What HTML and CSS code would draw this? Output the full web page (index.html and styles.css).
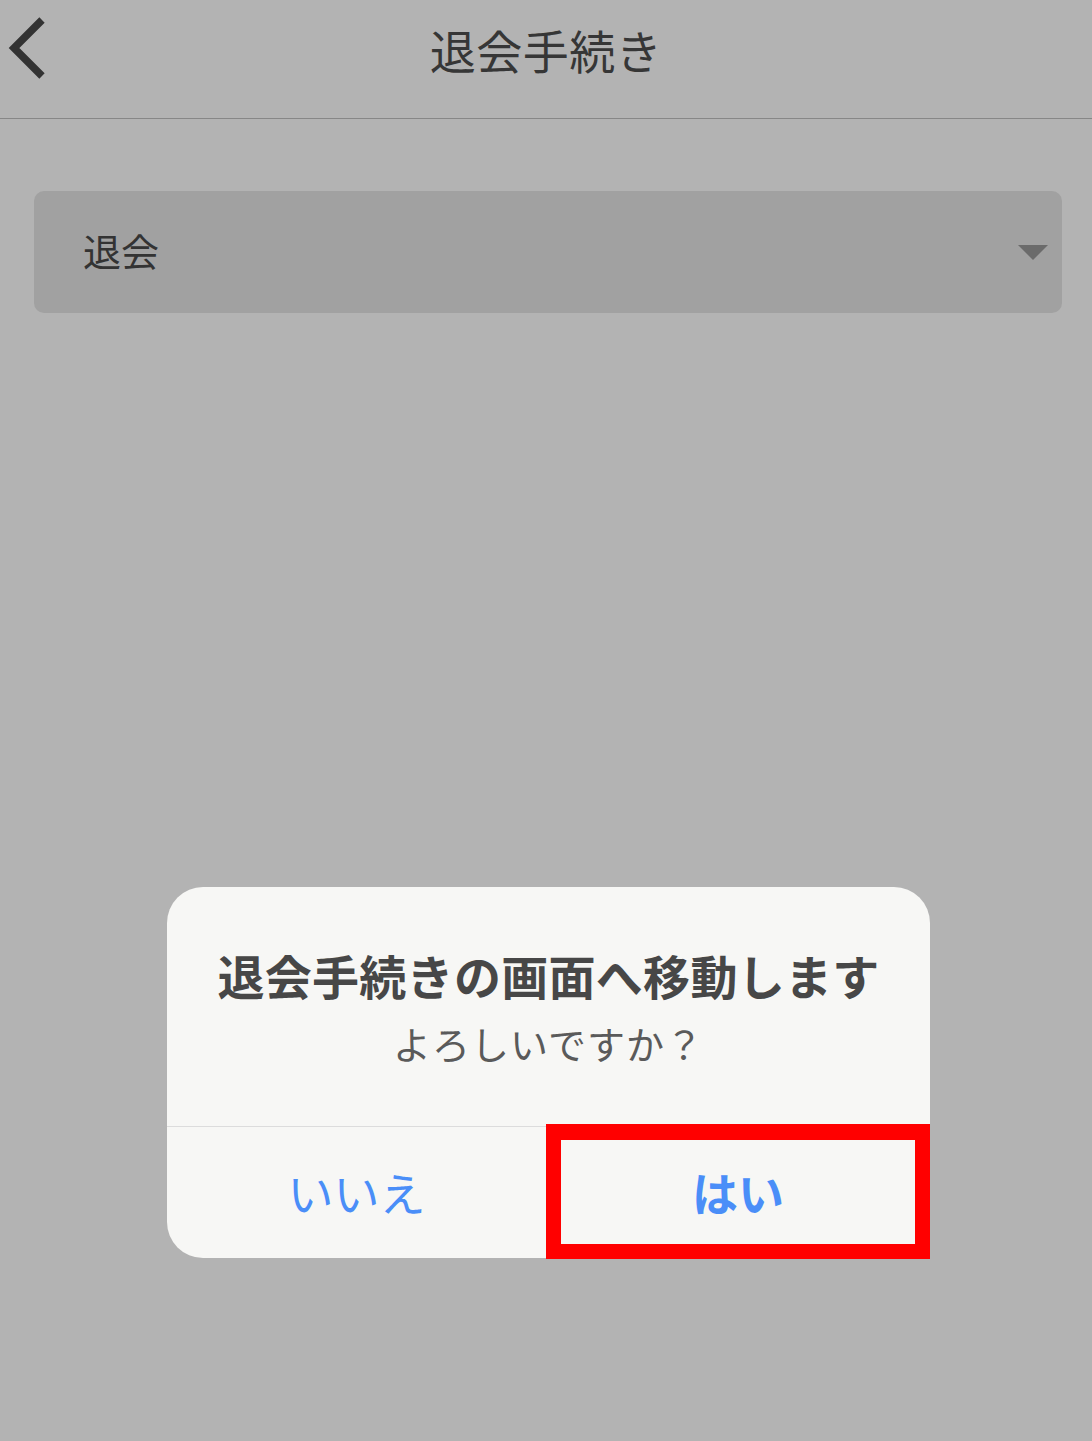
FILE: index.html
```html
<!DOCTYPE html>
<html lang="ja">
<head>
<meta charset="utf-8">
<title>退会手続き</title>
<link rel="stylesheet" href="styles.css">
</head>
<body>
<header class="navbar">
  <a class="back" aria-label="戻る">
    <svg width="56" height="70" viewBox="0 0 56 70"><polyline points="42,6 14,34 42,62" fill="none" stroke="#333" stroke-width="7.5" stroke-linecap="butt" stroke-linejoin="miter"/></svg>
  </a>
  <h1 class="nav-title">退会手続き</h1>
</header>
<main class="content">
  <div class="select">
    <span class="select-text">退会</span>
    <span class="caret"></span>
  </div>
</main>
<div class="dialog">
  <div class="dialog-body">
    <div class="dialog-title">退会手続きの画面へ移動します</div>
    <div class="dialog-msg">よろしいですか？</div>
  </div>
  <div class="dialog-actions">
    <div class="btn btn-no">いいえ</div>
    <div class="btn btn-yes">はい</div>
  </div>
  <div class="highlight"></div>
</div>
</body>
</html>
```
FILE: styles.css
```css
html, body {
  margin: 0;
  padding: 0;
}
body {
  width: 1092px;
  height: 1441px;
  background: #b3b3b3;
  font-family: "Noto Sans CJK JP", "Noto Sans", sans-serif;
  position: relative;
  overflow: hidden;
}
.navbar {
  height: 118px;
  border-bottom: 1px solid #878787;
  display: flex;
  align-items: center;
  justify-content: center;
  position: relative;
}
.back {
  position: absolute;
  left: 0;
  top: 14px;
  display: block;
  line-height: 0;
}
.nav-title {
  margin: 0;
  font-size: 46px;
  font-weight: 400;
  color: #363636;
  letter-spacing: 0.5px;
  padding-bottom: 20px;
  line-height: 1;
}
.content {
  padding: 72px 30px 0 34px;
}
.select {
  height: 122px;
  background: #a1a1a1;
  border-radius: 10px;
  display: flex;
  align-items: center;
  justify-content: space-between;
  padding: 0 14px 0 49px;
}
.select-text {
  font-size: 38px;
  color: #333;
  line-height: 1;
  padding-bottom: 4px;
}
.caret {
  width: 0;
  height: 0;
  border-left: 15px solid transparent;
  border-right: 15px solid transparent;
  border-top: 15px solid #6b6b6b;
  margin-right: 0;
}
.dialog {
  position: absolute;
  left: 167px;
  top: 887px;
  width: 763px;
  height: 371px;
  background: #f7f7f5;
  border-radius: 36px;
  display: flex;
  flex-direction: column;
}
.dialog-body {
  height: 240px;
  box-sizing: border-box;
  padding-top: 60px;
  display: flex;
  flex-direction: column;
  align-items: center;
  border-bottom: 1px solid #dcdcdc;
}
.dialog-title {
  font-size: 47px;
  font-weight: 700;
  color: #474747;
  line-height: 56px;
  letter-spacing: 0.3px;
  white-space: nowrap;
}
.dialog-msg {
  margin-top: 16px;
  font-size: 38px;
  font-weight: 400;
  color: #5a5a5a;
  line-height: 48px;
  letter-spacing: 1px;
}
.dialog-actions {
  flex: 1;
  display: flex;
}
.btn {
  flex: 0 0 379px;
  display: flex;
  align-items: center;
  justify-content: center;
  font-size: 46px;
  color: #4a8ef8;
  line-height: 1;
  padding-bottom: 4px;
}
.btn-yes {
  flex: 1;
  font-weight: 700;
}
.highlight {
  position: absolute;
  left: 379px;
  top: 237px;
  width: 384px;
  height: 135px;
  box-sizing: border-box;
  border: 15px solid #ff0000;
  border-top-width: 16px;
}
```
